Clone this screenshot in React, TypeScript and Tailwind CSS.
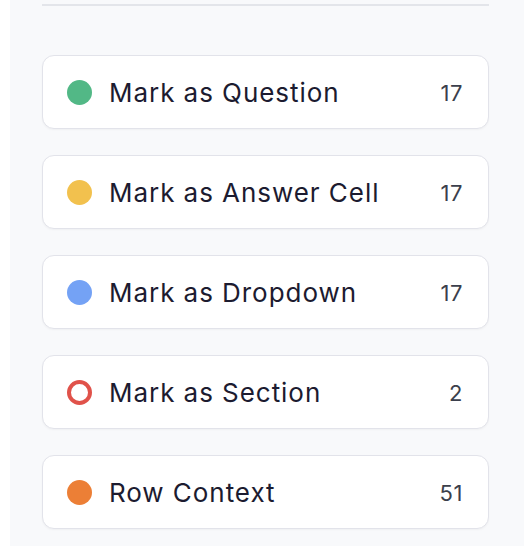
import React from "react";

type Item = { label: string; count: number; kind: "fill" | "ring"; color: string };

const items: Item[] = [
  { label: "Mark as Question", count: 17, kind: "fill", color: "bg-[#52b886]" },
  { label: "Mark as Answer Cell", count: 17, kind: "fill", color: "bg-[#f2c14e]" },
  { label: "Mark as Dropdown", count: 17, kind: "fill", color: "bg-[#74a2f5]" },
  { label: "Mark as Section", count: 2, kind: "ring", color: "border-[#e0524a]" },
  { label: "Row Context", count: 51, kind: "fill", color: "bg-[#ec7f36]" },
];

export default function App() {
  return (
    <div className="flex h-[546px] w-[524px] bg-white" style={{ fontFamily: "Inter, 'Noto Sans', sans-serif" }}>
      <div className="ml-[10px] flex-1 bg-[#f8f9fb] pl-[32px] pr-[35px] pt-[4px]">
        <div className="h-[2px] bg-[#e3e5ea]" />
        <div className="mt-[49px] flex flex-col gap-[26px]">
          {items.map((it) => (
            <div
              key={it.label}
              className="flex h-[74px] items-center rounded-[12px] border-[1.5px] border-[#e2e3ea] bg-white pl-[24px] pr-[25px] shadow-[0_1px_2px_rgba(0,0,0,0.04)]"
            >
              {it.kind === "fill" ? (
                <span className={`h-[25px] w-[25px] shrink-0 rounded-full ${it.color}`} />
              ) : (
                <span className={`h-[25px] w-[25px] shrink-0 rounded-full border-[4px] ${it.color}`} />
              )}
              <span className="ml-[17px] flex-1 pt-[2px] text-[26px] leading-none tracking-[0.95px] text-[#1c1b30]">{it.label}</span>
              <span className="pt-[2px] text-[22px] leading-none tracking-[0.6px] text-[#3b3f4c]">{it.count}</span>
            </div>
          ))}
        </div>
      </div>
    </div>
  );
}
